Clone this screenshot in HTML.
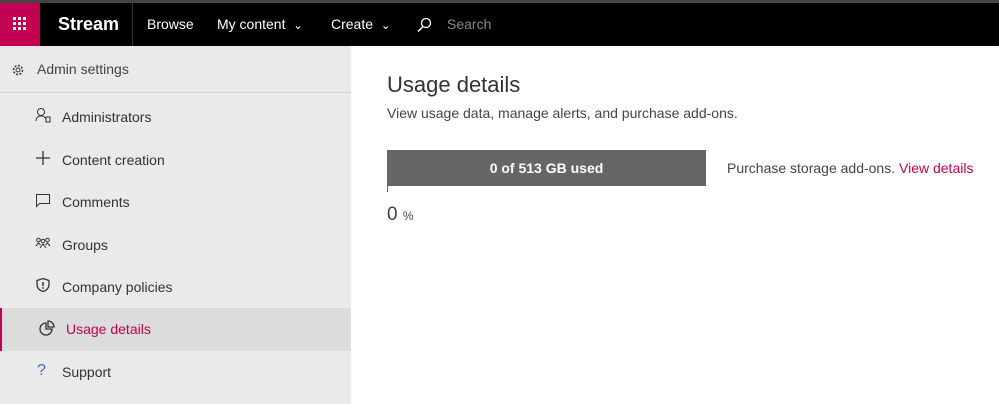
<!DOCTYPE html>
<html><head><meta charset="utf-8"><style>
*{margin:0;padding:0;box-sizing:border-box}
body{width:999px;height:404px;overflow:hidden;background:#fff;font-family:"Segoe UI","Liberation Sans",sans-serif;position:relative}
.top{position:absolute;left:0;top:0;width:999px;height:3px;background:#444}
.hdr{position:absolute;left:0;top:3px;width:999px;height:43px;background:#000;color:#fff}
.waf{position:absolute;left:0;top:0;width:40px;height:43px;background:#c30052}
.hdr span{position:absolute;top:13px;font-size:14px}
.side{position:absolute;left:0;top:46px;width:351px;height:358px;background:#eaeaea}
.adm{height:47px;border-bottom:1px solid #d0d0d0;position:relative}
.item{position:absolute;left:0;width:351px;height:43px;font-size:14px;color:#333}
.item span{position:absolute;left:62px;top:13px}
.item svg{position:absolute;left:35px;top:11px}
.sel{background:#dcdcdc;border-left:2px solid #c30052}
</style></head><body>
<div class="top"></div>
<div class="hdr">
<div class="waf"><svg width="40" height="43"><g fill="#fff"><rect x="13" y="14" width="3" height="3"/><rect x="18" y="14" width="3" height="3"/><rect x="23" y="14" width="3" height="3"/><rect x="13" y="19" width="3" height="3"/><rect x="18" y="19" width="3" height="3"/><rect x="23" y="19" width="3" height="3"/><rect x="13" y="24" width="3" height="3"/><rect x="18" y="24" width="3" height="3"/><rect x="23" y="24" width="3" height="3"/></g></svg></div>
<span style="left:58px;top:11px;font-size:18px;font-weight:bold">Stream</span>
<div style="position:absolute;left:132px;top:0;width:1px;height:43px;background:#333"></div>
<span style="left:147px">Browse</span>
<span style="left:217px">My content&nbsp; <small>⌄</small></span>
<span style="left:331px">Create&nbsp; <small>⌄</small></span>
<svg style="position:absolute;left:416px;top:14px" width="16" height="16"><circle cx="10" cy="6" r="4.5" fill="none" stroke="#fff" stroke-width="1.3"/><line x1="7" y1="9.5" x2="2" y2="14.5" stroke="#fff" stroke-width="1.5"/></svg>
<span style="left:447px;color:#888">Search</span>
</div>
<div class="side">
<div class="adm"><svg style="position:absolute;left:11px;top:17px" width="14" height="14"><circle cx="7" cy="7" r="4.5" fill="none" stroke="#333" stroke-width="1.5" stroke-dasharray="2 1.5"/><circle cx="7" cy="7" r="2" fill="none" stroke="#333"/></svg><span style="position:absolute;left:37px;top:15px;font-size:14px;color:#444">Admin settings</span></div>
</div>
<div class="item" style="top:96px"><svg width="16" height="16"><circle cx="6" cy="5" r="3.5" fill="none" stroke="#333"/><path d="M1 14c0-4 3-5 5-5s4 1 5 3" fill="none" stroke="#333"/><rect x="11" y="10" width="4" height="5" fill="none" stroke="#333"/></svg><span>Administrators</span></div>
<div class="item" style="top:139px"><svg width="16" height="16"><path d="M8 1v14M1 8h14" stroke="#333" stroke-width="1.3"/></svg><span>Content creation</span></div>
<div class="item" style="top:181px"><svg width="16" height="16"><path d="M1.5 2.5h13v9h-10l-3 3z" fill="none" stroke="#333"/></svg><span>Comments</span></div>
<div class="item" style="top:224px"><svg width="16" height="16"><circle cx="3.5" cy="5" r="1.8" fill="none" stroke="#333"/><circle cx="8" cy="6" r="1.8" fill="none" stroke="#333"/><circle cx="12.5" cy="5" r="1.8" fill="none" stroke="#333"/><path d="M1 11l2.5-3 2 2M5 13l3-4 3 4M10.5 10l2-2 2.5 3" fill="none" stroke="#333"/></svg><span>Groups</span></div>
<div class="item" style="top:266px"><svg width="16" height="16"><path d="M8 1.5l6 2v4c0 4-3 6-6 7-3-1-6-3-6-7v-4z" fill="none" stroke="#333" stroke-width="1.3"/><path d="M8 5v4" stroke="#333" stroke-width="1.5"/><circle cx="8" cy="11" r=".9" fill="#333"/></svg><span>Company policies</span></div>
<div class="item sel" style="top:308px"><svg width="16" height="16" style="left:37px;top:12px"><path d="M7 3a6 6 0 1 0 6 6H7z" fill="none" stroke="#333" stroke-width="1.3"/><path d="M9 1v6h6a6 6 0 0 0-6-6z" fill="none" stroke="#333" stroke-width="1.3"/></svg><span style="left:64px;color:#c30052">Usage details</span></div>
<div class="item" style="top:351px"><span style="left:37px;color:#3a6fc4;font-size:16px;top:11px">?</span><span>Support</span></div>
<div style="position:absolute;left:387px;top:72px;font-size:22px;color:#333">Usage details</div>
<div style="position:absolute;left:387px;top:105px;font-size:14px;color:#444">View usage data, manage alerts, and purchase add-ons.</div>
<div style="position:absolute;left:387px;top:150px;width:319px;height:36px;background:#666;color:#fff;font-size:14px;font-weight:bold;text-align:center;line-height:36px">0 of 513 GB used</div>
<div style="position:absolute;left:387px;top:186px;width:1px;height:6px;background:#666"></div>
<div style="position:absolute;left:727px;top:160px;font-size:14px;color:#444">Purchase storage add-ons. <span style="color:#c30052">View details</span></div>
<div style="position:absolute;left:387px;top:204px;font-size:19px;color:#444">0 <span style="font-size:12px">%</span></div>
</body></html>
